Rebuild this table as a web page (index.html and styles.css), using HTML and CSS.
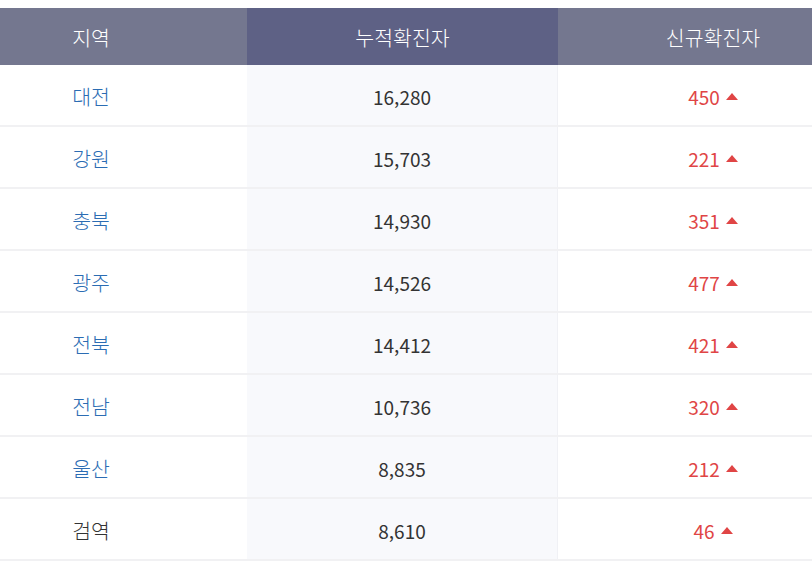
FILE: index.html
```html
<!DOCTYPE html>
<html lang="ko">
<head>
<meta charset="utf-8">
<link rel="stylesheet" href="styles.css">
</head>
<body>
<div class="wrap">
  <div class="table">
    <div class="row head">
      <div class="cell c1">지역</div>
      <div class="cell c2">누적확진자</div>
      <div class="cell c3">신규확진자</div>
    </div>
    <div class="row"><div class="cell c1 region">대전</div><div class="cell c2">16,280</div><div class="cell c3 new">450<span class="up"></span></div></div>
    <div class="row"><div class="cell c1 region">강원</div><div class="cell c2">15,703</div><div class="cell c3 new">221<span class="up"></span></div></div>
    <div class="row"><div class="cell c1 region">충북</div><div class="cell c2">14,930</div><div class="cell c3 new">351<span class="up"></span></div></div>
    <div class="row"><div class="cell c1 region">광주</div><div class="cell c2">14,526</div><div class="cell c3 new">477<span class="up"></span></div></div>
    <div class="row"><div class="cell c1 region">전북</div><div class="cell c2">14,412</div><div class="cell c3 new">421<span class="up"></span></div></div>
    <div class="row"><div class="cell c1 region">전남</div><div class="cell c2">10,736</div><div class="cell c3 new">320<span class="up"></span></div></div>
    <div class="row"><div class="cell c1 region">울산</div><div class="cell c2">8,835</div><div class="cell c3 new">212<span class="up"></span></div></div>
    <div class="row"><div class="cell c1 plain">검역</div><div class="cell c2">8,610</div><div class="cell c3 new">46<span class="up"></span></div></div>
  </div>
</div>
</body>
</html>
```

FILE: styles.css
```css
html, body {
  margin: 0;
  padding: 0;
  background: #ffffff;
  overflow: hidden;
}
.wrap {
  padding-top: 8px;
  margin-left: -65px;
  width: 933px;
}
.table {
  display: flex;
  flex-direction: column;
  font-family: "Noto Sans CJK KR", "Noto Sans", sans-serif;
  font-weight: 400;
  font-size: 19px;
}
.row {
  display: grid;
  grid-template-columns: 312px 311px 310px;
  height: 60px;
  border-bottom: 2px solid #f1f1f3;
}
.row.head {
  height: 57px;
  border-bottom: none;
}
.cell {
  display: flex;
  align-items: center;
  justify-content: center;
  color: #333333;
  padding-top: 2px;
}
.head .cell {
  color: #ffffff;
  background: #74778f;
  padding-top: 0;
  font-size: 20.5px;
  font-weight: 300;
}
.head .c2 {
  background: #5e6185;
}
.c2 {
  background: #f8f9fc;
}
.row:not(.head) .c2 {
  border-right: 1px solid #f0f1f5;
}
.region,
.plain {
  font-size: 20.5px;
  font-weight: 300;
}
.region {
  color: #2b6cb3;
}
.new {
  color: #e04545;
}
.up {
  display: inline-block;
  width: 0;
  height: 0;
  margin-left: 6px;
  margin-top: 1px;
  border-left: 6px solid transparent;
  border-right: 6px solid transparent;
  border-bottom: 7px solid #e04545;
}
```
